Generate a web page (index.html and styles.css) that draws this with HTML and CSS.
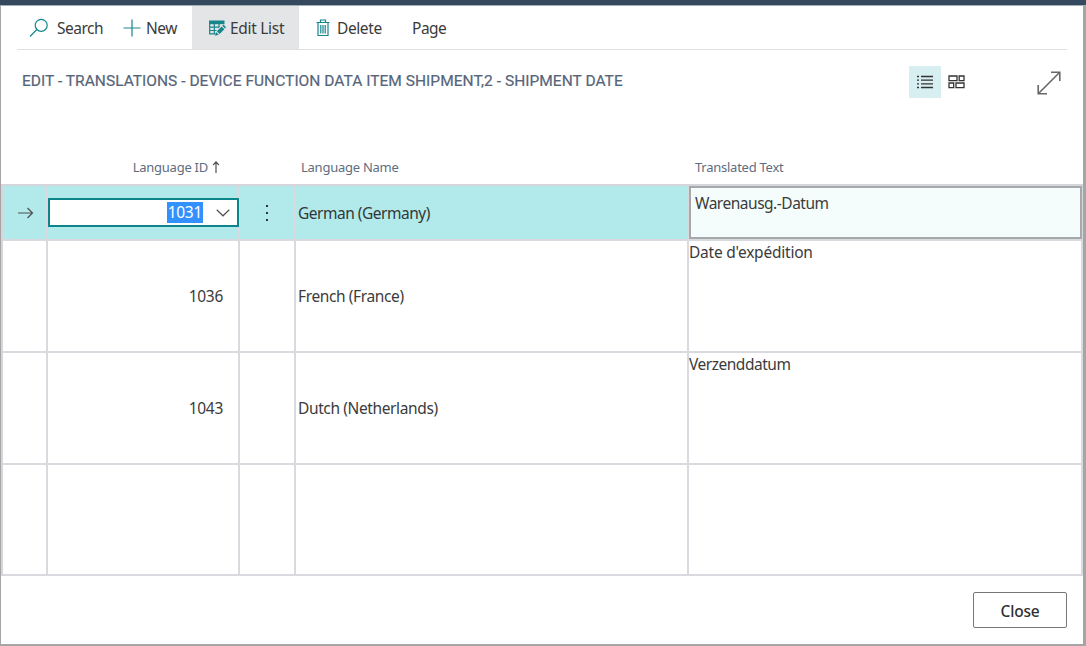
FILE: index.html
```html
<!DOCTYPE html>
<html lang="en">
<head>
<meta charset="utf-8">
<title>Edit - Translations</title>
<link rel="stylesheet" href="styles.css">
</head>
<body>
<div class="window">
  <nav class="toolbar">
    <a class="action search"><svg width="20" height="20" viewBox="0 0 20 20"><circle cx="12.2" cy="7.3" r="6"/><path d="M7.8 11.5 1 18.5"/></svg><span>Search</span></a>
    <a class="action new"><svg width="18" height="18" viewBox="0 0 18 18"><path d="M9 .5v17M.5 9h17"/></svg><span>New</span></a>
    <a class="action edit"><svg width="18" height="18" viewBox="0 0 18 18"><path class="solid" d="M1 1.5h15.5v3.7H1z"/><path d="M1.7 4v10.8h6M1 8.2h11M1 11.5h8M6.3 4v10.5M11 4v5"/><path class="halo" d="m7 17 1-5 6-6.5 4 3.5-6.5 6.5z"/><path class="solid" d="m7 16.8 1-3.8 2.8 2.8zM8.8 12.2l4.8-4.8 2.8 2.8-4.8 4.8zM14.3 6.7l1.2-1.2 2.5 2.7-1 1.2z"/></svg><span>Edit List</span></a>
    <a class="action delete"><svg width="14" height="18" viewBox="0 0 14 18"><path d="M.5 3.5h13M4.5 3V1h5v2M2 4v12.5h10V4M4.8 6v8.5M7 6v8.5M9.2 6v8.5"/></svg><span>Delete</span></a>
    <a class="action page"><span>Page</span></a>
  </nav>
  <header class="heading">
    <h1>EDIT - TRANSLATIONS - DEVICE FUNCTION DATA ITEM SHIPMENT,2 - SHIPMENT DATE</h1>
    <div class="views">
      <span class="view active"><svg width="16" height="14" viewBox="0 0 16 14"><path d="M0 1.5h2M4 1.5h12M0 5.2h2M4 5.2h12M0 8.8h2M4 8.8h12M0 12.5h2M4 12.5h12"/></svg></span>
      <span class="view"><svg width="17" height="14" viewBox="0 0 17 14"><path d="M1 1h8v4.7H1zM11.2 1H16v4.7h-4.8zM1 8h4.7v4.7H1zM8 8h8v4.7H8z"/></svg></span>
    </div>
    <svg class="expand" width="24" height="24" viewBox="0 0 24 24"><path d="M1.5 22.5 22.5 1.5M14 1.2h8.8V10M1.2 14v8.8H10"/></svg>
  </header>
  <div class="columns">
    <span class="col-id"><span>Language ID</span><svg width="8" height="12" viewBox="0 0 8 12"><path d="M4 12V1M1 4.2 4 1l3 3.2"/></svg></span>
    <span class="col-name"><span>Language Name</span></span>
    <span class="col-text"><span>Translated Text</span></span>
  </div>
  <main class="grid">
    <div class="cell sel marker"><svg width="16" height="12" viewBox="0 0 16 12"><path d="M0 6h14M9.5 1 14.5 6l-5 5"/></svg></div>
    <div class="cell sel edit-cell"><div class="combo"><span class="value">1031</span><svg width="14" height="8" viewBox="0 0 14 8"><path d="m.7.8 6.3 6 6.3-6"/></svg></div></div>
    <div class="cell sel dots"><i></i><i></i><i></i></div>
    <div class="cell sel"><span>German (Germany)</span></div>
    <div class="cell text-cell"><div class="textarea"><span>Warenausg.-Datum</span></div></div>

    <div class="cell"></div><div class="cell num"><span>1036</span></div><div class="cell"></div>
    <div class="cell"><span class="name">French (France)</span></div><div class="cell top"><span class="wide">Date d'expédition</span></div>

    <div class="cell"></div><div class="cell num"><span>1043</span></div><div class="cell"></div>
    <div class="cell"><span class="name">Dutch (Netherlands)</span></div><div class="cell top"><span>Verzenddatum</span></div>

    <div class="cell"></div><div class="cell"></div><div class="cell"></div><div class="cell"></div><div class="cell"></div>
  </main>
  <footer class="footer"><button class="close">Close</button></footer>
</div>
</body>
</html>
```
FILE: styles.css
```css
* { box-sizing: border-box; }
body {
  margin: 0;
  background: #a5a5a5;
  font: 15.5px/20px "Noto Sans", "Open Sans", sans-serif;
  letter-spacing: -0.48px;
  color: #3b3b3b;
}
svg { fill: none; stroke: #505050; stroke-width: 1.2; flex: none; }
.window {
  display: flex;
  flex-direction: column;
  height: 644px;
  margin-right: 3px;
  border-left: 1px solid #a5a5a5;
  background: #fff;
  box-shadow: 3px 0 0 #a5a5a5;
}
.window::before {
  content: "";
  height: 5px;
  margin: 0 -3px 0 -1px;
  background: #34495e;
  border-bottom: 1px solid #a3adb7;
  flex: none;
}
.toolbar {
  display: flex;
  height: 45px;
  margin: 0 16px;
  border-bottom: 1px solid #e0e0e0;
}
.toolbar { height: 44px; margin-top: 0; }
.action { display: flex; align-items: center; white-space: nowrap; letter-spacing: -0.5px; }
.action svg { stroke: #16868b; }
.search { width: 106px; padding-left: 12px; gap: 8px; }
.new { width: 69px; gap: 5px; }
.edit { width: 107px; padding-left: 16px; gap: 4px; background: #e4e5e7; letter-spacing: -0.3px; }
.edit .solid { fill: #16868b; stroke: none; }
.edit .halo { fill: #e4e5e7; stroke: none; }
.delete { width: 114px; padding-left: 17px; gap: 7px; letter-spacing: -0.4px; }
.page { margin-left: -1px; }
.heading { display: flex; height: 99px; padding: 16px 22px 0 21px; }
.heading h1 {
  width: 887px;
  margin: 5px 0 0;
  font: 400 15.5px/20px Roboto, sans-serif;
  letter-spacing: 0.03px;
  -webkit-text-stroke: 0.2px #56657a;
  color: #56657a;
  white-space: nowrap;
}
.views { display: flex; height: 32px; }
.view { display: grid; place-items: center; width: 32px; height: 32px; }
.view + .view { width: 31px; }
.view svg { stroke: #333; stroke-width: 1.3; }
.view.active { background: #d7eff1; }
.expand { margin: 5px 0 0 auto; }
.expand path { stroke: #686868; stroke-width: 1.6; }
.columns {
  display: grid;
  grid-template-columns: 237px 56px 394px 1fr;
  height: 36px;
  padding: 8px 0 0 1px;
  font-size: 13px;
  letter-spacing: -0.25px;
  color: #606d7f;
}
.col-id { display: flex; justify-content: flex-end; gap: 4px; padding-right: 19px; }
.col-id svg { margin-top: 4px; }
.col-name { grid-column: 3; padding-left: 6px; }
.col-text { padding-left: 6px; }
.grid {
  display: grid;
  grid-template-columns: 45px 192px 56px 393px 394px;
  grid-template-rows: 55px 112px 112px 111px;
  width: 1082px;
  border: solid #d5d6dc;
  border-width: 2px 0 0 2px;
  margin-top: -1px;
}
.cell {
  display: flex;
  align-items: center;
  min-width: 0;
  padding-left: 2px;
  border: solid #d9dadf;
  border-width: 0 2px 2px 0;
  white-space: nowrap;
}
.sel { background: #b2e9eb; color: #303838; }
.marker { padding-left: 15px; }
.edit-cell { padding: 0; }
.combo {
  display: flex;
  align-items: center;
  justify-content: flex-end;
  gap: 13px;
  width: 191px;
  height: 29px;
  padding-right: 7px;
  border: 2px solid #0d868b;
  background: #fff;
  flex: none;
  z-index: 1;
}
.value { background: #3390ff; color: #fff; line-height: 21px; padding: 0 1px; letter-spacing: -0.3px; }
.dots { flex-direction: column; justify-content: center; gap: 5px; padding: 0; }
.dots i { width: 2px; height: 2px; background: #333; }
.text-cell { padding: 0; }
.textarea {
  align-self: stretch;
  width: 393px;
  padding: 5px 4px;
  border: 2px solid #a6a9a9;
  background: #f4fdfc;
  flex: none;
}
.num { justify-content: flex-end; padding-right: 15px; letter-spacing: -0.3px; }
.name { letter-spacing: -0.38px; }
.top { align-items: flex-start; padding: 1px 0 0; }
.wide { letter-spacing: -0.22px; }
.footer { display: flex; justify-content: flex-end; padding: 16px 16px 0 0; }
.close {
  width: 94px;
  height: 36px;
  padding: 1px 0 0;
  border: 1px solid #777;
  border-radius: 2px;
  background: #fff;
  color: #303030;
  font: 500 15.5px/20px "Noto Sans", sans-serif;
  letter-spacing: -0.2px;
}
```
